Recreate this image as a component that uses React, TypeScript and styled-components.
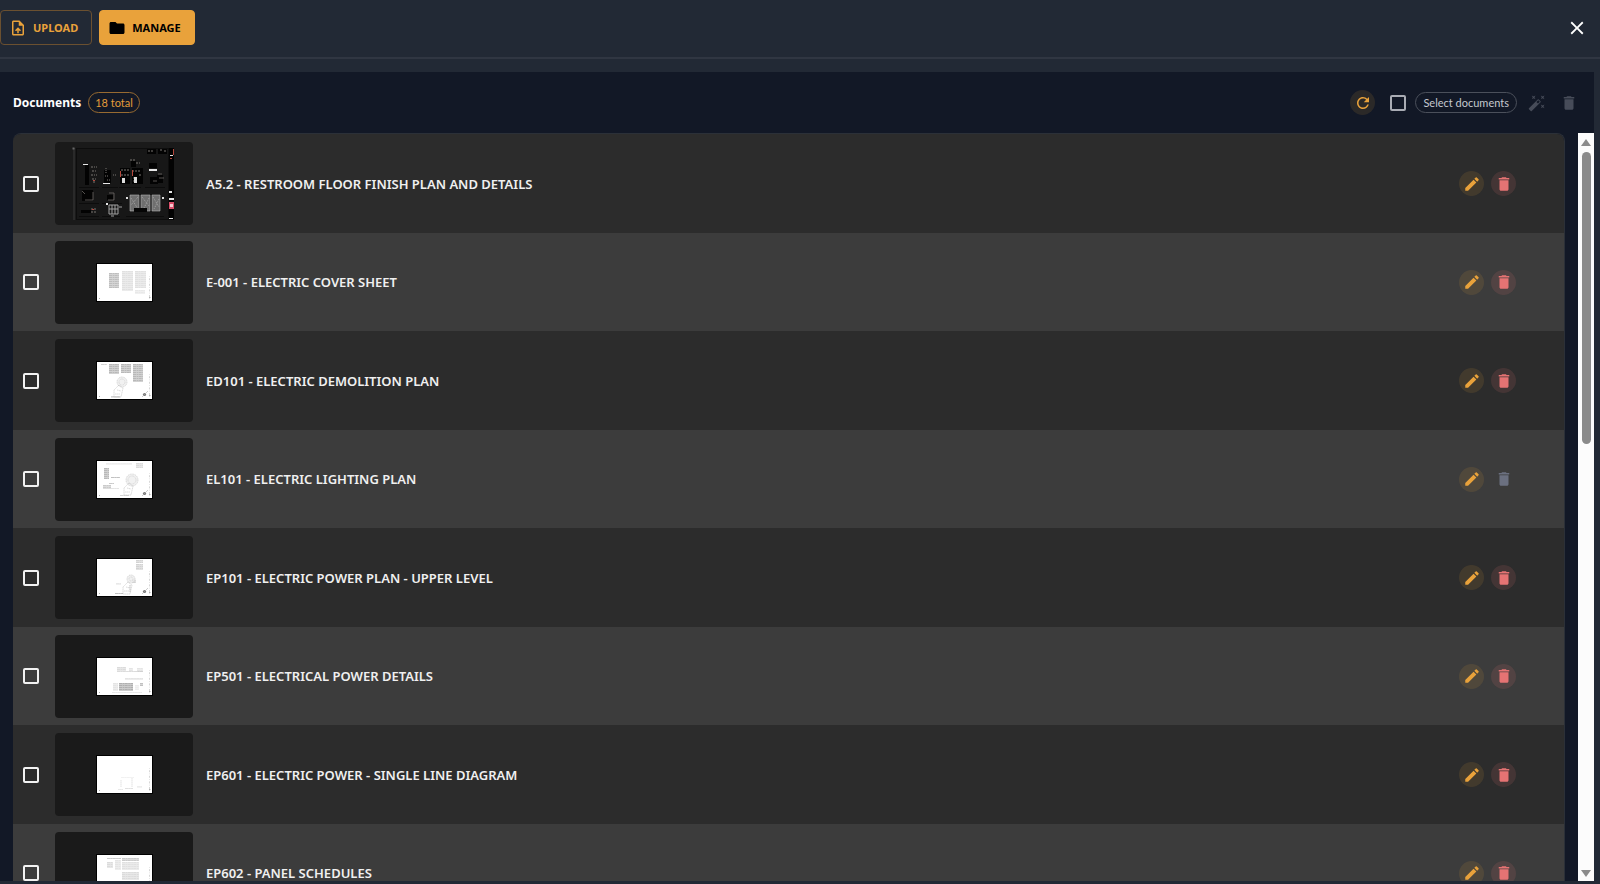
import React, { useState } from 'react';
import styled, { createGlobalStyle, css } from 'styled-components';
import {
  MdAutoFixHigh,
  MdClose,
  MdDelete,
  MdEdit,
  MdFolder,
  MdOutlineUploadFile,
  MdRefresh,
} from 'react-icons/md';

const color = {
  shell: '#222935',
  divider: '#303642',
  panel: '#121826',
  amber: '#e9a23b',
  red: '#e57373',
  rowDark: '#2c2c2c',
  rowLight: '#3c3c3c',
  thumb: '#1a1a1a',
  muted: '#6b7080',
};

const GlobalStyle = createGlobalStyle`
  *, *::before, *::after { box-sizing: border-box; }
  body {
    margin: 0;
    background: ${color.shell};
    color: #fff;
    font-family: 'Noto Sans', 'Open Sans', sans-serif;
    font-size: 13px;
  }
  button { font: inherit; cursor: pointer; }
`;

const Shell = styled.div`
  display: flex;
  flex-direction: column;
  height: 100vh;
  padding-bottom: 3px;
  overflow: hidden;
`;

const TopBar = styled.header`
  display: flex;
  align-items: center;
  gap: 7px;
  flex: none;
  height: 59px;
  padding: 0 12px 2px 0;
  border-bottom: 2px solid ${color.divider};
`;

const TabButton = styled.button<{ $active?: boolean }>`
  display: flex;
  align-items: center;
  gap: 6px;
  height: 35px;
  padding: 0 13px 0 8px;
  border: 1px solid #6b5030;
  border-radius: 4px;
  background: transparent;
  color: ${color.amber};
  font-size: 11px;
  font-weight: 700;
  line-height: 16px;

  ${({ $active }) =>
    $active &&
    css`
      border-color: ${color.amber};
      background: ${color.amber};
      color: #000;
    `}
`;

const CloseButton = styled.button`
  display: flex;
  margin-left: auto;
  padding: 0;
  border: 0;
  background: none;
  color: #fff;
`;

const Panel = styled.main`
  display: flex;
  flex-direction: column;
  flex: 1;
  min-height: 0;
  margin: 13px 6px 0 0;
  background: ${color.panel};
`;

const PanelHeader = styled.div`
  display: flex;
  align-items: center;
  justify-content: space-between;
  flex: none;
  height: 61px;
  padding: 0 13px;
`;

const Cluster = styled.div`
  display: flex;
  align-items: center;
  gap: 7px;
`;

const Title = styled.h1`
  margin: 0;
  font-size: 12px;
  font-weight: 700;
  line-height: 20px;
`;

const chip = css`
  display: flex;
  align-items: center;
  height: 21px;
  padding: 0 7px;
  border-radius: 11px;
  font-family: Lato, 'Noto Sans', sans-serif;
  font-size: 11px;
  font-weight: 400;
`;

const TotalChip = styled.span`
  ${chip}
  padding: 0 6px;
  border: 1px solid #976a31;
  color: #e39c3a;
`;

const SelectLabel = styled.label`
  ${chip}
  border: 1px solid #4b505b;
  color: #c5c8cf;
`;

const Checkbox = styled.input<{ $muted?: boolean }>`
  appearance: none;
  flex: none;
  width: 16px;
  height: 16px;
  margin: 0;
  border: 2px solid ${({ $muted }) => ($muted ? '#a9acb4' : '#f2f2f2')};
  border-radius: 2px;

  &:checked {
    background: ${color.amber};
  }
`;

const HeaderTick = styled.span`
  display: flex;
  padding: 0 2px 0 8px;
`;

const tones = {
  edit: css`
    background: rgba(233, 162, 59, 0.12);
    color: ${color.amber};
  `,
  remove: css`
    background: rgba(229, 115, 115, 0.13);
    color: ${color.red};
  `,
  idle: css`
    background: transparent;
    color: ${color.muted};
  `,
  faint: css`
    background: transparent;
    color: #474c59;
  `,
};

const RoundButton = styled.button<{ $tone: keyof typeof tones }>`
  display: flex;
  align-items: center;
  justify-content: center;
  width: 25px;
  height: 25px;
  padding: 0;
  border: 0;
  border-radius: 50%;
  ${({ $tone }) => tones[$tone]}
`;

const Scroller = styled.div`
  display: flex;
  flex: 1;
  min-height: 0;
  padding-left: 13px;
`;

const List = styled.ul`
  flex: 1;
  margin: 0 13px 0 0;
  padding: 0;
  overflow-y: auto;
  scrollbar-width: none;
  list-style: none;
  border: 1px solid #2b3038;
  border-width: 1px 1px 0 0;
  border-radius: 8px 8px 0 0;
  background: ${color.rowLight};
`;

const Row = styled.li`
  display: flex;
  align-items: center;
  height: 99px;
  padding: 0 48px 0 10px;
  background: ${color.rowDark};

  &:nth-child(even) {
    height: 98px;
    background: ${color.rowLight};
  }
`;

const Thumb = styled.div`
  display: flex;
  align-items: center;
  justify-content: center;
  flex: none;
  width: 138px;
  height: 83px;
  margin: 0 13px 0 16px;
  border-radius: 4px;
  background: ${color.thumb};
`;

const DocName = styled.span`
  flex: 1;
  color: #f0f0f0;
  font-weight: 600;
  line-height: 20px;
`;

const ScrollTrack = styled.div`
  display: flex;
  flex-direction: column;
  align-items: center;
  gap: 5px;
  width: 16px;
  padding: 6px 0 4px;
  background: #fcfcfc;
`;

const ScrollArrow = styled.span<{ $down?: boolean }>`
  border: 5px solid transparent;
  border-top-width: ${({ $down }) => ($down ? '7px' : '0')};
  border-bottom-width: ${({ $down }) => ($down ? '0' : '7px')};
  border-top-color: ${({ $down }) => ($down ? '#8b8b8b' : 'transparent')};
  border-bottom-color: ${({ $down }) => ($down ? 'transparent' : '#8b8b8b')};
`;

const ScrollRail = styled.div`
  flex: 1;
  padding-top: 1px;
`;

const ScrollThumb = styled.div`
  width: 9px;
  height: 41%;
  border-radius: 5px;
  background: #8b8b8b;
`;

/* A mark on a sheet: x, y, width, height, ink strength */
type Mark = [number, number, number, number, number];

type Sheet = { blocks: Mark[]; plan?: { x: number; y: number; r: number }; north?: boolean };

const sheets: Record<string, Sheet> = {
  'E-001': {
    blocks: [
      [12, 9, 10, 15, 0.75],
      [25, 7, 11, 20, 0.35],
      [38, 7, 11, 17, 0.35],
      [38, 26, 10, 4, 0.25],
    ],
  },
  ED101: {
    blocks: [
      [4, 2, 6, 1, 0.5],
      [12, 2, 10, 10, 0.8],
      [24, 2, 10, 9, 0.8],
      [36, 2, 10, 18, 0.8],
      [14, 34, 9, 2, 0.5],
    ],
    plan: { x: 25, y: 20, r: 5 },
    north: true,
  },
  EL101: {
    blocks: [
      [7, 7, 5, 11, 0.8],
      [9, 2, 26, 2, 0.2],
      [39, 2, 7, 5, 0.4],
      [14, 16, 9, 1, 0.7],
      [6, 24, 8, 4, 0.6],
      [12, 22, 5, 1, 0.6],
      [14, 27, 8, 1, 0.3],
      [23, 34, 9, 1, 0.5],
    ],
    plan: { x: 35, y: 19, r: 6 },
    north: true,
  },
  EP101: {
    blocks: [
      [39, 1, 7, 3, 0.5],
      [39, 5, 7, 6, 0.5],
      [18, 34, 8, 1, 0.7],
      [19, 24, 5, 2, 0.25],
      [35, 21, 4, 3, 0.5],
      [32, 26, 2, 7, 0.35],
    ],
    plan: { x: 34, y: 20, r: 4 },
    north: true,
  },
  EP501: {
    blocks: [
      [20, 9, 9, 4, 0.4],
      [32, 10, 4, 3, 0.3],
      [40, 10, 6, 4, 0.3],
      [20, 13, 26, 1, 0.4],
      [28, 20, 18, 2, 0.3],
      [22, 25, 14, 8, 0.9],
      [16, 25, 5, 8, 0.3],
      [38, 27, 4, 5, 0.2],
      [43, 25, 3, 3, 0.7],
      [15, 34, 30, 1, 0.25],
    ],
  },
  EP601: {
    blocks: [
      [24, 21, 13, 1, 0.15],
      [23, 24, 2, 7, 0.15],
      [34, 22, 2, 9, 0.15],
      [21, 33, 5, 1, 0.25],
      [28, 32, 8, 1, 0.35],
      [40, 30, 5, 2, 0.2],
    ],
  },
  EP602: {
    blocks: [
      [10, 3, 14, 1, 0.6],
      [10, 7, 6, 6, 0.4],
      [18, 5, 6, 10, 0.3],
      [25, 3, 17, 3, 0.6],
      [25, 7, 17, 8, 0.35],
      [25, 17, 17, 8, 0.4],
      [25, 27, 17, 8, 0.4],
    ],
  },
};

function PaperSheet({ sheet }: { sheet: Sheet }) {
  return (
    <svg width="57" height="39" viewBox="-1 -1 57 39" aria-hidden="true">
      <rect x="-1" y="-1" width="57" height="39" fill="#000" />
      <rect width="55" height="37" fill="#fff" />
      {sheet.blocks.map(([x, y, w, h, ink], i) => (
        <g key={i} opacity={ink}>
          <rect x={x} y={y} width={w} height={h} fill="#b4b4b4" opacity="0.75" />
          <path
            d={Array.from({ length: Math.ceil(h / 2) }, (_, n) => `M${x} ${y + n * 2 + 0.5}h${w}`).join('')}
            stroke="#9a9a9a"
            strokeWidth="0.7"
            strokeDasharray="3 0.6 1.6 0.5"
          />
        </g>
      ))}
      {sheet.plan && (
        <g fill="none" stroke="#a8a8a8" strokeWidth="0.5" opacity="0.8">
          <circle cx={sheet.plan.x} cy={sheet.plan.y} r={sheet.plan.r} fill="#eee" strokeDasharray="1.2 0.6" />
          <circle cx={sheet.plan.x} cy={sheet.plan.y} r={sheet.plan.r - 2} strokeDasharray="0.8 0.6" />
          <path
            d={`M${sheet.plan.x - 3} ${sheet.plan.y + 3}l-5 5v7h7l2-9zm-2 5l4 1m-6 3h5`}
            strokeDasharray="1.4 0.4"
          />
        </g>
      )}
      {sheet.north && (
        <g>
          <circle cx="47.5" cy="32.5" r="1.6" fill="#777" />
          <path d="M45 35l6-6" stroke="#aaa" strokeWidth="0.6" />
        </g>
      )}
      <path d="M52.5 12v23" stroke="#ccc" strokeWidth="0.8" strokeDasharray="0.6 1.6 2 1.4" />
      <path d="M52 33.5h1.5M2 34.5h1" stroke="#999" strokeWidth="0.8" />
    </svg>
  );
}

function DarkSheet() {
  return (
    <svg width="138" height="83" viewBox="0 0 138 83" aria-hidden="true">
      <rect x="18" y="6" width="2" height="72" fill="#2a2a2a" />
      <rect x="17.5" y="5.5" width="2" height="2" fill="#666" />
      <rect x="21.5" y="6.5" width="92" height="71" fill="#171717" stroke="#0d0d0d" />
      <g stroke="#0c0c0c">
        <path d="M24 45.5h20M47 45.5h16M64 45.5h22M90 45.5h20M24 61.5h20M47 61.5h20M24 74.5h20M47 74.5h18M71 74.5h38" />
      </g>
      <g fill="#030303">
        <rect x="30" y="23" width="4" height="20" />
        <rect x="49" y="28" width="7" height="13" />
        <rect x="65" y="26" width="10" height="16" />
        <rect x="77" y="26" width="11" height="16" />
        <rect x="76" y="19" width="5" height="6" />
        <rect x="94" y="21" width="8" height="5" />
        <rect x="95" y="35" width="8" height="7" />
        <rect x="102" y="33" width="6" height="8" />
        <rect x="27" y="48" width="11" height="11" />
        <rect x="52" y="53" width="6" height="5" />
        <rect x="26" y="68" width="10" height="3" />
        <rect x="92" y="7" width="9" height="5" />
        <rect x="103" y="7" width="9" height="5" />
        <rect x="114" y="6" width="5" height="72" />
      </g>
      <g fill="#e8e8e8">
        <rect x="28" y="22" width="5" height="1" />
        <rect x="48" y="41" width="7" height="1" />
        <rect x="94" y="27" width="8" height="2" />
        <rect x="51" y="61" width="2" height="2" />
        <rect x="114" y="49" width="3" height="2" />
        <rect x="114" y="56" width="5" height="2" />
        <rect x="114" y="76" width="4" height="1" />
        <rect x="115" y="13" width="3" height="1" />
      </g>
      <g fill="none" stroke="#7a7672" strokeWidth="1">
        <path d="M36 25h6M37 29h4M36 33h6M37 37h5M38 40h3" strokeDasharray="2 1 1 1" />
        <path d="M51 26v5M50 34h4M58 33h3M52 38h4" strokeDasharray="1 1" />
        <path d="M66 28h8M66 33h8M68 36v5M77 29h9M79 35v6M84 33h3M75 18h6M81 21h4" strokeDasharray="2 1" />
        <path d="M103 32h4M104 36h5M98 39h4M27 49l3 3M38 50v8h-8M54 51h5v7h-6" opacity="0.7" />
        <path d="M36 67h5M36 70h5M105 8h3M109 9h3M93 9h6" strokeDasharray="2 1" />
        <path d="M54 63h9v9h-9zM57 63v9M60 63v9M54 67h9M64 65h3M56 74h3" stroke="#a0a0a0" />
      </g>
      <g fill="#dedede">
        <rect x="67" y="36" width="3" height="5" />
        <rect x="79" y="35" width="3" height="6" />
        <rect x="71" y="55" width="2" height="2" />
        <rect x="107" y="55" width="2" height="2" />
      </g>
      <g fill="#6f6f6f" stroke="#b4b4b4" strokeWidth="0.6">
        <path d="M75 53h9v16h-9zM86 53h9v16h-9zM97 53h8v16h-8z" />
      </g>
      <path
        d="M76 56l7 11M83 55l-7 8M87 55l7 9M94 56l-6 12M98 55l6 10M104 57l-5 10"
        stroke="#b8b8b8"
        strokeWidth="0.7"
        strokeDasharray="1 1"
      />
      <path d="M79 66h13v4h-13z" fill="#050505" />
      <g fill="#b5483c">
        <rect x="65" y="29" width="1" height="6" />
        <rect x="77" y="28" width="1" height="6" />
        <rect x="38" y="38" width="2" height="1" />
        <rect x="37" y="67" width="2" height="1" />
        <rect x="118" y="7" width="1" height="6" />
        <rect x="115" y="16" width="2" height="1" />
      </g>
      <rect x="114" y="60" width="5" height="7" fill="#d84f6a" />
      <rect x="115" y="62" width="3" height="3" fill="#f6c9cf" />
    </svg>
  );
}

type Doc = { id: string; name: string; locked?: boolean };

const documents: Doc[] = [
  { id: 'A5.2', name: 'RESTROOM FLOOR FINISH PLAN AND DETAILS' },
  { id: 'E-001', name: 'ELECTRIC COVER SHEET' },
  { id: 'ED101', name: 'ELECTRIC DEMOLITION PLAN' },
  { id: 'EL101', name: 'ELECTRIC LIGHTING PLAN', locked: true },
  { id: 'EP101', name: 'ELECTRIC POWER PLAN - UPPER LEVEL' },
  { id: 'EP501', name: 'ELECTRICAL POWER DETAILS' },
  { id: 'EP601', name: 'ELECTRIC POWER - SINGLE LINE DIAGRAM' },
  { id: 'EP602', name: 'PANEL SCHEDULES' },
];

export default function App() {
  const [selected, setSelected] = useState<string[]>([]);
  const allSelected = selected.length === documents.length;

  const toggle = (id: string) =>
    setSelected((ids) => (ids.includes(id) ? ids.filter((other) => other !== id) : [...ids, id]));

  return (
    <>
      <GlobalStyle />
      <Shell>
        <TopBar>
          <TabButton type="button">
            <MdOutlineUploadFile size={18} />
            UPLOAD
          </TabButton>
          <TabButton type="button" $active>
            <MdFolder size={18} />
            MANAGE
          </TabButton>
          <CloseButton type="button" aria-label="Close">
            <MdClose size={22} />
          </CloseButton>
        </TopBar>

        <Panel>
          <PanelHeader>
            <Cluster>
              <Title>Documents</Title>
              <TotalChip>18 total</TotalChip>
            </Cluster>
            <Cluster>
              <RoundButton type="button" $tone="edit" aria-label="Refresh">
                <MdRefresh size={18} />
              </RoundButton>
              <HeaderTick>
                <Checkbox
                  id="select-all"
                  type="checkbox"
                  $muted
                  checked={allSelected}
                  onChange={() => setSelected(allSelected ? [] : documents.map((doc) => doc.id))}
                />
              </HeaderTick>
              <SelectLabel htmlFor="select-all">Select documents</SelectLabel>
              <RoundButton type="button" $tone="faint" aria-label="Auto name" disabled>
                <MdAutoFixHigh size={18} />
              </RoundButton>
              <RoundButton type="button" $tone="faint" aria-label="Delete selected" disabled>
                <MdDelete size={18} />
              </RoundButton>
            </Cluster>
          </PanelHeader>

          <Scroller>
            <List>
              {documents.map((doc) => (
                <Row key={doc.id}>
                  <Checkbox
                    type="checkbox"
                    aria-label={`Select ${doc.id}`}
                    checked={selected.includes(doc.id)}
                    onChange={() => toggle(doc.id)}
                  />
                  <Thumb>{sheets[doc.id] ? <PaperSheet sheet={sheets[doc.id]} /> : <DarkSheet />}</Thumb>
                  <DocName>{`${doc.id} - ${doc.name}`}</DocName>
                  <Cluster>
                    <RoundButton type="button" $tone="edit" aria-label={`Rename ${doc.id}`}>
                      <MdEdit size={18} />
                    </RoundButton>
                    <RoundButton
                      type="button"
                      $tone={doc.locked ? 'idle' : 'remove'}
                      aria-label={`Delete ${doc.id}`}
                      disabled={doc.locked}
                    >
                      <MdDelete size={18} />
                    </RoundButton>
                  </Cluster>
                </Row>
              ))}
            </List>
            <ScrollTrack aria-hidden="true">
              <ScrollArrow />
              <ScrollRail>
                <ScrollThumb />
              </ScrollRail>
              <ScrollArrow $down />
            </ScrollTrack>
          </Scroller>
        </Panel>
      </Shell>
    </>
  );
}
